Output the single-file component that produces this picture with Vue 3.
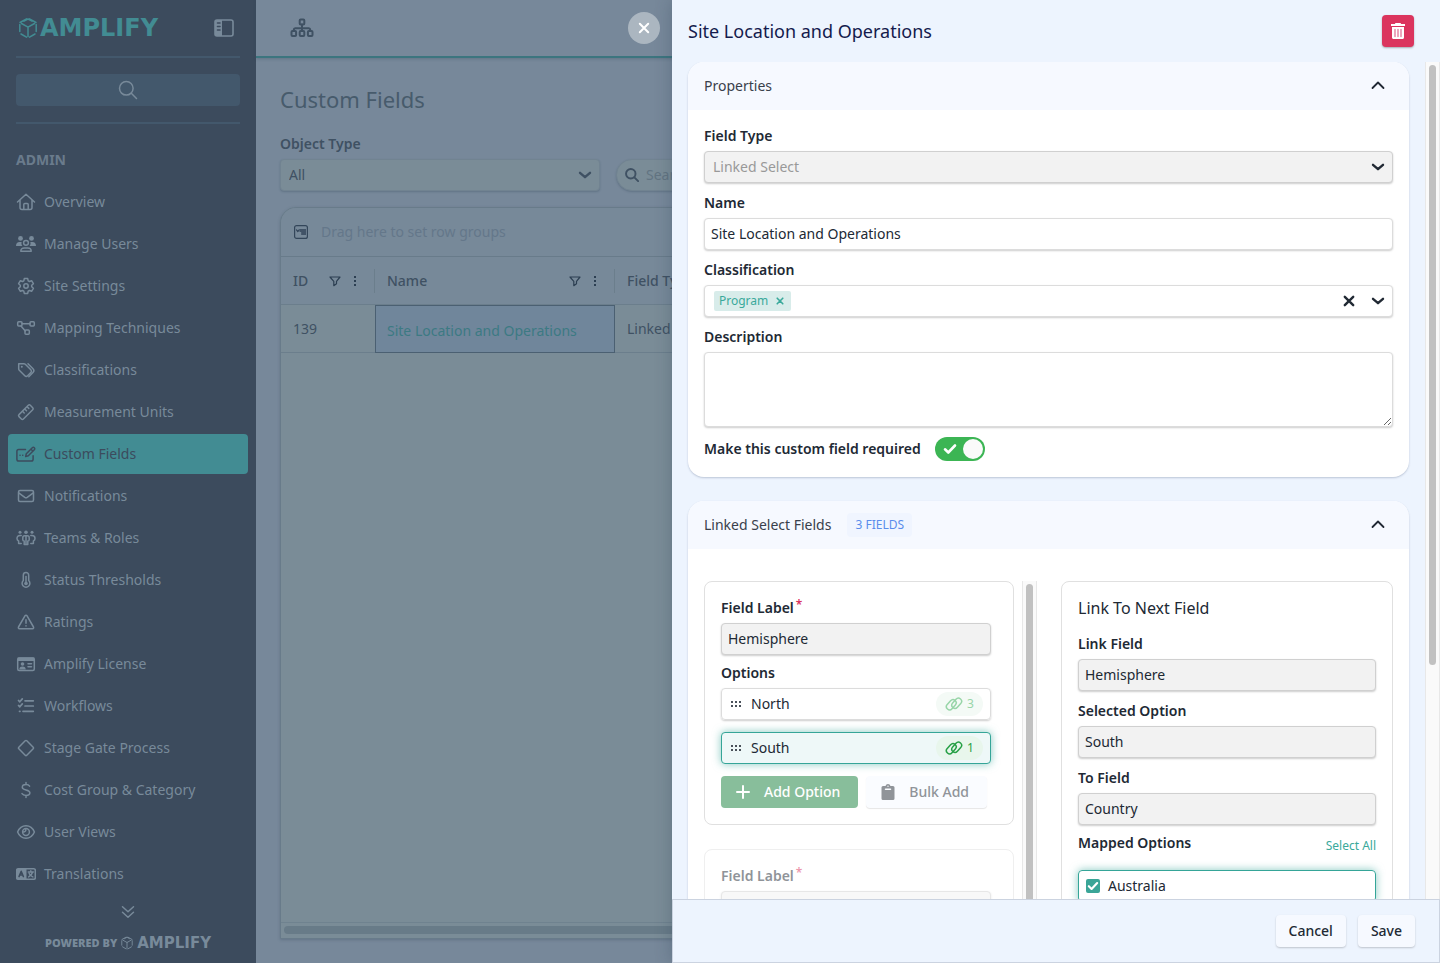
<template>
  <div class="layout">
    <!-- Sidebar -->
    <aside class="sidebar">
      <div class="brand">
        <a href="#" class="logo" aria-label="Amplify">
          <svg class="cube" viewBox="0 0 20 22" v-html="icons.cube"></svg>
          <span>AMPLIFY</span>
        </a>
        <button class="collapse" type="button" aria-label="Collapse menu">
          <svg viewBox="0 0 20 18" v-html="icons.panel"></svg>
        </button>
      </div>
      <hr />
      <button class="side-search" type="button" aria-label="Search">
        <svg viewBox="0 0 20 20" v-html="icons.search"></svg>
      </button>
      <hr />
      <h2>ADMIN</h2>
      <nav>
        <a
          v-for="item in menu"
          :key="item.label"
          href="#"
          class="nav-item"
          :class="{ active: item.active }"
        >
          <svg viewBox="0 0 20 20" v-html="icons[item.icon]"></svg>
          <span>{{ item.label }}</span>
        </a>
      </nav>
      <button class="more" type="button" aria-label="More">
        <svg viewBox="0 0 14 14" v-html="icons.double"></svg>
      </button>
      <div class="powered">
        <span>POWERED BY</span>
        <svg class="cube" viewBox="0 0 20 22" v-html="icons.cube"></svg>
        <span class="powered-logo">AMPLIFY</span>
      </div>
    </aside>

    <!-- Page -->
    <main class="page">
      <header class="topbar">
        <button type="button" aria-label="Hierarchy">
          <svg viewBox="0 0 24 20" v-html="icons.sitemap"></svg>
        </button>
      </header>
      <div class="content">
        <h1>Custom Fields</h1>
        <label class="filter-label" for="object-type">Object Type</label>
        <div class="filters">
          <div class="filter-select">
            <select id="object-type" v-model="objectType">
              <option>All</option>
            </select>
            <svg viewBox="0 0 14 14" v-html="icons.down"></svg>
          </div>
          <div class="filter-search">
            <svg viewBox="0 0 16 16" v-html="icons.find"></svg>
            <input v-model="search" type="text" placeholder="Search" aria-label="Search fields" />
          </div>
        </div>

        <section class="grid">
          <div class="group-bar">
            <svg viewBox="0 0 14 14" v-html="icons.group"></svg>
            <span>Drag here to set row groups</span>
          </div>
          <table>
            <colgroup>
              <col class="col-id" />
              <col class="col-name" />
              <col />
            </colgroup>
            <thead>
              <tr>
                <th v-for="col in columns" :key="col">
                  <div class="th">
                    <span>{{ col }}</span>
                    <svg class="funnel" viewBox="0 0 12 12" v-html="icons.funnel"></svg>
                    <svg class="dots" viewBox="0 0 4 12" v-html="icons.dots"></svg>
                  </div>
                </th>
              </tr>
            </thead>
            <tbody>
              <tr>
                <td>139</td>
                <td class="focused"><a href="#">Site Location and Operations</a></td>
                <td>Linked Select</td>
              </tr>
            </tbody>
          </table>
          <div class="grid-scroll"><div></div></div>
        </section>
      </div>
    </main>

    <!-- Drawer -->
    <aside class="drawer">
      <button class="close" type="button" aria-label="Close">
        <svg viewBox="0 0 12 12" v-html="icons.close"></svg>
      </button>
      <header class="drawer-head">
        <h2>{{ name }}</h2>
        <button class="delete" type="button" aria-label="Delete">
          <svg viewBox="0 0 14 16" v-html="icons.trash"></svg>
        </button>
      </header>

      <div class="drawer-main">
        <div class="drawer-body">
          <section class="card">
            <button class="card-head" type="button">
              <span>Properties</span>
              <svg viewBox="0 0 14 14" v-html="icons.up"></svg>
            </button>
            <div class="card-body">
              <div class="field">
                <label for="field-type">Field Type</label>
                <div class="select">
                  <select id="field-type" disabled>
                    <option>Linked Select</option>
                  </select>
                  <svg viewBox="0 0 14 14" v-html="icons.down"></svg>
                </div>
              </div>
              <div class="field">
                <label for="name">Name</label>
                <input id="name" v-model="name" class="control" type="text" />
              </div>
              <div class="field">
                <label for="classification">Classification</label>
                <div class="control multi">
                  <span class="tag">
                    Program
                    <button type="button" aria-label="Remove Program">
                      <svg viewBox="0 0 12 12" v-html="icons.close"></svg>
                    </button>
                  </span>
                  <input id="classification" type="text" />
                  <button type="button" aria-label="Clear">
                    <svg class="clear" viewBox="0 0 12 12" v-html="icons.close"></svg>
                  </button>
                  <button type="button" aria-label="Open">
                    <svg viewBox="0 0 14 14" v-html="icons.down"></svg>
                  </button>
                </div>
              </div>
              <div class="field">
                <label for="description">Description</label>
                <textarea id="description" v-model="description" class="control"></textarea>
              </div>
              <label class="toggle-row">
                <span>Make this custom field required</span>
                <input v-model="required" type="checkbox" />
                <span class="toggle">
                  <svg viewBox="0 0 14 12" v-html="icons.check"></svg>
                </span>
              </label>
            </div>
          </section>

          <section class="card">
            <button class="card-head" type="button">
              <span>Linked Select Fields</span>
              <span class="badge">3 FIELDS</span>
              <svg viewBox="0 0 14 14" v-html="icons.up"></svg>
            </button>
            <div class="card-body linked">
              <div class="levels">
                <div class="panel">
                  <div class="field">
                    <label for="level-1">Field Label<sup>*</sup></label>
                    <input id="level-1" class="control" type="text" value="Hemisphere" disabled />
                  </div>
                  <h3>Options</h3>
                  <div
                    v-for="opt in options"
                    :key="opt.label"
                    class="option"
                    :class="{ selected: opt.selected }"
                  >
                    <svg class="grip" viewBox="0 0 12 8" v-html="icons.grip"></svg>
                    <span>{{ opt.label }}</span>
                    <span class="links">
                      <svg viewBox="0 0 18 14" v-html="icons.link"></svg>
                      {{ opt.links }}
                    </span>
                  </div>
                  <div class="panel-actions">
                    <button class="add" type="button" disabled>
                      <svg viewBox="0 0 14 14" v-html="icons.plus"></svg>
                      Add Option
                    </button>
                    <button class="bulk" type="button" disabled>
                      <svg viewBox="0 0 14 16" v-html="icons.clipboard"></svg>
                      Bulk Add
                    </button>
                  </div>
                </div>
                <div class="panel faded">
                  <div class="field">
                    <label for="level-2">Field Label<sup>*</sup></label>
                    <input id="level-2" class="control" type="text" value="Country" disabled />
                  </div>
                </div>
              </div>
              <div class="track"><div class="thumb"></div></div>
              <div class="panel mapping">
                <h4>Link To Next Field</h4>
                <div v-for="f in mapping" :key="f.id" class="field">
                  <label :for="f.id">{{ f.label }}</label>
                  <input :id="f.id" class="control" type="text" :value="f.value" disabled />
                </div>
                <div class="mapped-head">
                  <h3>Mapped Options</h3>
                  <a href="#">Select All</a>
                </div>
                <label class="mapped-option">
                  <input v-model="australia" type="checkbox" />
                  <span class="box"><svg viewBox="0 0 14 12" v-html="icons.check"></svg></span>
                  <span>Australia</span>
                </label>
              </div>
            </div>
          </section>
        </div>
        <div class="track body-track"><div class="thumb"></div></div>
      </div>

      <footer class="drawer-foot">
        <button type="button">Cancel</button>
        <button type="button">Save</button>
      </footer>
    </aside>
  </div>
</template>

<script setup>
import { ref } from "vue";

const objectType = ref("All");
const search = ref("");
const name = ref("Site Location and Operations");
const description = ref("");
const required = ref(true);
const australia = ref(true);

const columns = ["ID", "Name", "Field Type"];

const menu = [
  { label: "Overview", icon: "home" },
  { label: "Manage Users", icon: "users" },
  { label: "Site Settings", icon: "gear" },
  { label: "Mapping Techniques", icon: "diagram" },
  { label: "Classifications", icon: "tags" },
  { label: "Measurement Units", icon: "ruler" },
  { label: "Custom Fields", icon: "edit", active: true },
  { label: "Notifications", icon: "mail" },
  { label: "Teams & Roles", icon: "team" },
  { label: "Status Thresholds", icon: "thermo" },
  { label: "Ratings", icon: "warning" },
  { label: "Amplify License", icon: "idcard" },
  { label: "Workflows", icon: "checklist" },
  { label: "Stage Gate Process", icon: "diamond" },
  { label: "Cost Group & Category", icon: "dollar" },
  { label: "User Views", icon: "eye" },
  { label: "Translations", icon: "language" },
];

const options = [
  { label: "North", links: 3 },
  { label: "South", links: 1, selected: true },
];

const mapping = [
  { id: "link-field", label: "Link Field", value: "Hemisphere" },
  { id: "selected-option", label: "Selected Option", value: "South" },
  { id: "to-field", label: "To Field", value: "Country" },
];

// svg contents, stroked with currentColor unless they carry class "f"
const icons = {
  cube: '<path d="M8.5 1.8 2 5.5M11.5 1.8 18 5.5M1.8 7.5v7M18.2 7.5v7M3 17l5.5 3.2M17 17l-5.5 3.2M3.5 6.5 10 10.2l6.500-3.7M10 10.2v9.300M6 4.200l4-2.200 4 2.200"/>',
  panel: '<rect x="1" y="1" width="18" height="16" rx="2"/><path class="f" d="M1 1h7v16H1z"/><path d="M3.500 4h2.500M3.500 7.500h2.500M3.500 11h2.500" stroke="#3c4b5d"/>',
  search: '<circle cx="8.3" cy="8.3" r="6.8"/><path d="m13.3 13.3 5.200 5.200"/>',
  home: '<path d="M1.5 10 10 2.300l8.500 7.700M4 8v7.500a2 2 0 0 0 2 2h8a2 2 0 0 0 2-2V8M7.800 17.500v-5a1 1 0 0 1 1-1h2.400a1 1 0 0 1 1 1v5"/>',
  users: '<circle class="f" cx="4.500" cy="4.400" r="2.400"/><circle class="f" cx="15.500" cy="4.400" r="2.400"/><path class="f" d="M0 12c0-2.600 1.400-4 3.500-4h2.200c-.5 1.500-.3 2.800.7 4zM20 12c0-2.600-1.400-4-3.500-4h-2.200c.5 1.500.3 2.800-.7 4z"/><circle cx="10" cy="8.800" r="2.400"/><path d="M4.800 17.200c0-2.200 1.400-3.200 3.400-3.200h3.600c2 0 3.400 1 3.400 3.200z"/>',
  gear: '<path d="M8.300 2.600h3.400l.5 2.200 1.300.7 2.100-.8 1.800 3-1.700 1.500v1.600l1.700 1.500-1.800 3-2.100-.8-1.300.7-.5 2.200H8.300l-.5-2.200-1.300-.7-2.100.8-1.800-3 1.700-1.500V9.200L2.600 7.700l1.800-3 2.100.8 1.300-.7z"/><circle cx="10" cy="10" r="2.200"/>',
  diagram: '<rect x="1.700" y="3.700" width="4.300" height="4.300" rx="1"/><rect x="14" y="3.700" width="4.300" height="4.300" rx="1"/><rect x="9" y="12" width="4.300" height="4.300" rx="1"/><path d="M6 5.800h8M5 8l4.300 5"/>',
  tags: '<path d="M2.700 3.700v5.200c0 .5.200 1 .6 1.400l5.500 5.500c.8.800 2 .8 2.800 0l3.200-3.200c.8-.8.800-2 0-2.800L9.300 4.300c-.4-.4-.9-.6-1.400-.6z"/><path d="m12 3.700 5 5.100c1 1 1 2.700 0 3.700l-4.200 4.200"/><circle class="f" cx="5.800" cy="6.800" r="1"/>',
  ruler: '<path d="m3 12.600 9.300-9.300c.6-.6 1.400-.6 2 0l2.400 2.400c.6.600.6 1.400 0 2l-9.300 9.300c-.6.600-1.400.6-2 0L3 14.600c-.6-.6-.6-1.400 0-2zM7 9.800l1.200 1.200M9.300 7.500l1.200 1.200M11.600 5.200l1.200 1.200"/>',
  edit: '<path d="M9.500 5.500H2.700a1.800 1.800 0 0 0-1.800 1.800v8c0 1 .8 1.800 1.800 1.800h12.600c1 0 1.800-.8 1.800-1.800v-3.500M9.700 12.500l.6-2.800 6-6c.6-.6 1.400-.6 2 0s.6 1.400 0 2l-6 6zM14.800 5l2.200 2.200"/><path d="M4 11.300h.1M6.700 11.300h.1"/>',
  mail: '<rect x="2.500" y="4.500" width="15" height="11" rx="1.500"/><path d="m2.700 6.800 6.100 4.600c.8.500 1.600.5 2.400 0l6.100-4.600"/>',
  team: '<circle class="f" cx="4" cy="4.200" r="1.500"/><circle class="f" cx="10" cy="4.200" r="1.800"/><circle class="f" cx="16" cy="4.200" r="1.500"/><path d="M5.200 7.500H4c-1.800 0-3 1.200-3 3 0 1.300.6 2 1.600 2.400V15.500h2.600M14.800 7.500H16c1.800 0 3 1.200 3 3 0 1.300-.6 2-1.600 2.400V15.500h-2.600M8.700 7.700h2.600c1 0 1.900.9 1.900 2v2c0 .8-.6 1.300-1.400 1.300v3.500H8.200V13c-.8 0-1.400-.5-1.400-1.300v-2c0-1.100.9-2 1.900-2zM10 8.500v7.500"/>',
  thermo: '<path d="M10 2.500a2.700 2.700 0 0 0-2.700 2.700v5.300a3.900 3.900 0 1 0 5.400 0V5.200A2.700 2.700 0 0 0 10 2.500z"/><path d="M10 6.500v6"/><circle class="f" cx="10" cy="13.500" r="1.800"/>',
  warning: '<path d="M9.100 3.700 2.500 15c-.4.800 0 1.700.9 1.700h13.200c.9 0 1.300-.9.9-1.700L10.900 3.700c-.4-.7-1.400-.7-1.800 0z"/><path d="M10 7.800v3.500M10 13.800v.1"/>',
  idcard: '<rect x="1.700" y="4" width="16.600" height="12.500" rx="1.500"/><path class="f" d="M1.700 3.500h16.600v3.500H1.700z"/><circle class="f" cx="6.500" cy="10" r="1.800"/><path class="f" d="M3.300 15.500c0-2 1-3 3.200-3s3.200 1 3.200 3z"/><path d="M12 9.800h3.500M12 12.800h3.500"/>',
  checklist: '<path d="m2.500 4.500 1.300 1.300 2.500-2.900M2.500 9.500l1.300 1.300 2.500-2.900M9 4.800h8.300M9 10h8.300M7 15.300h10.300M3.500 15.300h.5" stroke-width="1.700"/>',
  diamond: '<path d="M9.200 2.800 2.800 9.200c-.5.500-.5 1.100 0 1.600l6.400 6.400c.5.500 1.100.5 1.600 0l6.400-6.400c.5-.5.500-1.100 0-1.600l-6.400-6.400c-.5-.5-1.100-.5-1.600 0z"/>',
  dollar: '<path d="M13.600 6.200C12.800 5 11.500 4.600 10 4.600c-2.300 0-3.700 1-3.700 2.600 0 3.800 7.600 1.600 7.600 5.600 0 1.600-1.500 2.600-3.900 2.600-1.800 0-3.200-.6-4-1.800M10 2.500v2M10 15.500v2"/>',
  eye: '<path d="M1.600 10c1.600-3.900 4.600-6.200 8.400-6.200s6.800 2.300 8.400 6.200c-1.600 3.900-4.600 6.200-8.400 6.200S3.200 13.900 1.600 10z"/><circle cx="10" cy="10" r="3.400"/><path d="M9.800 7.500c.2 1.500-.8 2.500-2.500 2.500"/>',
  language: '<rect x=".7" y="4.700" width="18.600" height="10.600" rx="1.500"/><path class="f" d="M.7 4.700h9.800v10.600H.7z"/><path d="m3 12.600 2.200-5.300 2.200 5.300M3.700 11h3" stroke="#3c4b5d"/><path d="M12.300 8h5M14.800 6.800V8M16.500 8.300c-.5 2-2 3.700-3.800 4.600M13.200 9.500c.8 1.600 2 2.800 3.600 3.400"/>',
  double: '<path d="m1.500 1.800 5.500 5 5.500-5M1.500 7.300l5.500 5 5.500-5"/>',
  sitemap: '<rect x="9.700" y="1.500" width="4.600" height="5" rx="1"/><rect x="1.500" y="13" width="4.600" height="5" rx="1"/><rect x="9.700" y="13" width="4.600" height="5" rx="1"/><rect x="17.900" y="13" width="4.600" height="5" rx="1"/><path d="M12 6.500V13M3.800 13v-1.300c0-.9.500-1.500 1.400-1.500h13.600c.9 0 1.400.6 1.400 1.500V13"/>',
  down: '<path d="m2 4.800 5 4.400 5-4.400"/>',
  up: '<path d="m1.500 9 5.500-5.500 5.500 5.500"/>',
  find: '<circle cx="6.600" cy="6.600" r="5.400"/><path d="m10.700 10.700 4.300 4.300"/>',
  group: '<rect x=".6" y=".6" width="12.800" height="12.800" rx="2"/><path class="f" opacity=".8" d="M5.500 4h6.500v6H7.200V7H5.500z"/><path d="m2.500 4.800 1.300 1.800 1.300-1.800" stroke-width="1.200"/>',
  funnel: '<path d="M1 2h10L7.500 6.300v2.400l-2.700 2V6.300z"/>',
  dots: '<path class="f" d="M1 1h2v2H1zM1 5h2v2H1zM1 9h2v2H1z"/>',
  close: '<path d="m1.800 1.800 8.400 8.400M10.200 1.800l-8.400 8.400"/>',
  trash: '<path class="f" d="M4.500 0h5l.7 1H14v2H0V1h3.800z"/><path class="f" d="M1 4h12v10.500c0 .8-.7 1.500-1.500 1.500h-9c-.8 0-1.500-.7-1.500-1.500z"/><path d="M4 6.500v7M7 6.500v7M10 6.500v7" stroke="#e689a8"/>',
  check: '<path d="m2 6.300 3.300 3.200L12 2.500"/>',
  grip: '<path class="f" d="M1 1h2v2H1zM5 1h2v2H5zM9 1h2v2H9zM1 5h2v2H1zM5 5h2v2H5zM9 5h2v2H9z"/>',
  link: '<rect x=".6" y="4.500" width="11.400" height="6.400" rx="3.200" transform="rotate(-48 6.300 7.700)"/><rect x="6" y="3.100" width="11.400" height="6.400" rx="3.200" transform="rotate(-48 11.700 6.300)"/>',
  plus: '<path d="M7 1v12M1 7h12"/>',
  clipboard: '<path class="f" d="M2 2h2.500a2.600 2.600 0 0 1 5 0H12a1.500 1.500 0 0 1 1.500 1.500v11A1.500 1.500 0 0 1 12 16H2a1.500 1.500 0 0 1-1.500-1.500v-11A1.500 1.500 0 0 1 2 2z"/><path d="M4.500 5.300h5" stroke="#fafcff"/><circle cx="7" cy="2.300" r=".7" fill="#fafcff" stroke="none"/>',
};
</script>

<style>
body {
  margin: 0;
  overflow: hidden;
}

svg .f {
  fill: currentColor;
  stroke: none;
}
</style>

<style scoped>
.layout {
  position: relative;
  display: flex;
  height: 100vh;
  overflow: hidden;
  font-family: "Noto Sans", sans-serif;
  font-size: 14px;
  line-height: 20px;
  color: #212934;
}

.layout *,
.layout *::before {
  box-sizing: border-box;
}

svg {
  display: block;
  flex: none;
  fill: none;
  stroke: currentColor;
  stroke-width: 1.5;
  stroke-linecap: round;
  stroke-linejoin: round;
}

button,
input,
select,
textarea {
  font: inherit;
  color: inherit;
}

button {
  display: flex;
  align-items: center;
  justify-content: center;
  padding: 0;
  border: none;
  background: none;
  cursor: pointer;
}

a {
  color: inherit;
  text-decoration: none;
}

h1,
h2,
h3,
h4 {
  margin: 0;
  font-weight: 400;
}

/* sidebar */
.sidebar {
  display: flex;
  flex: none;
  flex-direction: column;
  width: 256px;
  background: #3c4b5d;
  color: #788a9a;
}

.brand {
  display: flex;
  align-items: center;
  justify-content: space-between;
  height: 56px;
  padding: 0 22px 0 18px;
}

.logo {
  display: flex;
  align-items: center;
  gap: 2px;
  color: #428c93;
  font: bold 24px/24px "DejaVu Sans", sans-serif;
}

.logo .cube {
  width: 20px;
  height: 22px;
}

.collapse svg {
  width: 20px;
  height: 18px;
  stroke-width: 1.6;
}

hr {
  flex: none;
  width: 224px;
  height: 2px;
  margin: 0 16px;
  border: none;
  background: #43586c;
}

.side-search {
  flex: none;
  height: 32px;
  margin: 16px;
  border-radius: 4px;
  background: #43586c;
}

.side-search svg {
  width: 20px;
  height: 20px;
}

.sidebar h2 {
  margin: 26px 16px 12px;
  color: #6a7b8c;
  font-size: 14px;
  font-weight: 700;
}

nav {
  display: flex;
  flex-direction: column;
  gap: 2px;
  padding: 0 8px;
}

.nav-item {
  display: flex;
  align-items: center;
  gap: 8px;
  height: 40px;
  padding: 0 8px;
  border-radius: 4px;
}

.nav-item svg {
  width: 20px;
  height: 20px;
}

.nav-item.active {
  background: #428c93;
  color: #3c4b5d;
}

.more {
  height: 36px;
}

.more svg {
  width: 14px;
  height: 14px;
}

.powered {
  display: flex;
  align-items: center;
  justify-content: center;
  gap: 3px;
  height: 26px;
  font-size: 11px;
  font-weight: 900;
}

.powered .cube {
  width: 14px;
  height: 14px;
}

.powered-logo {
  font: bold 15px/20px "DejaVu Sans", sans-serif;
}

/* page */
.page {
  display: flex;
  flex: 1;
  flex-direction: column;
  min-width: 0;
  background: #77889a;
  color: #3f5163;
}

.topbar {
  display: flex;
  flex: none;
  align-items: center;
  height: 58px;
  padding: 0 34px;
  border-bottom: 2px solid #3c757f;
  box-shadow: 0 1px 3px rgba(50, 70, 90, 0.3);
}

.topbar svg {
  width: 24px;
  height: 20px;
  stroke-width: 2;
}

.content {
  display: flex;
  flex: 1;
  flex-direction: column;
  min-height: 0;
  padding: 26px 24px 24px;
}

h1 {
  margin-bottom: 20px;
  color: #475b6c;
  font-size: 22px;
  line-height: 30px;
}

.filter-label {
  margin-bottom: 5px;
  font-weight: 600;
}

.filters {
  display: flex;
  gap: 16px;
  margin-bottom: 16px;
}

.filter-select {
  position: relative;
  width: 320px;
}

.filter-select select,
.filter-search {
  height: 32px;
  border: 1px solid #718391;
  border-radius: 4px;
  background: #7a8c97;
  box-shadow: 0 1px 2px rgba(50, 70, 90, 0.3);
}

.filter-select select,
.select select {
  appearance: none;
  width: 100%;
  padding: 0 8px;
  opacity: 1;
}

.filter-select svg,
.select svg {
  position: absolute;
  top: 9px;
  right: 8px;
  width: 14px;
  height: 14px;
  stroke-width: 2.4;
  pointer-events: none;
}

.filter-search {
  display: flex;
  flex: 1;
  align-items: center;
  gap: 7px;
  padding: 0 8px;
  border-radius: 16px;
}

.filter-search svg {
  width: 14px;
  height: 14px;
  stroke-width: 2.2;
}

.filter-search input {
  flex: 1;
  min-width: 0;
  padding: 0;
  border: none;
  background: none;
}

.filter-search input::placeholder {
  color: #627482;
}

.grid {
  display: flex;
  flex: 1;
  flex-direction: column;
  border: 1px solid #687b8a;
  border-radius: 16px 16px 0 0;
  background: #7a8c97;
  box-shadow: 0 1px 3px rgba(50, 70, 90, 0.3);
  overflow: hidden;
}

.group-bar {
  display: flex;
  flex: none;
  align-items: center;
  gap: 13px;
  height: 49px;
  padding: 0 13px;
  border-bottom: 1px solid #687b8a;
  background: #778999;
  color: #64778a;
}

.group-bar svg {
  width: 14px;
  height: 14px;
  color: #33465a;
  stroke-width: 1.2;
}

table {
  width: 100%;
  border-collapse: separate;
  border-spacing: 0;
  table-layout: fixed;
}

.col-id {
  width: 94px;
}

.col-name {
  width: 240px;
}

th,
td {
  height: 48px;
  padding: 0 12px;
  border-bottom: 1px solid #6b7e8c;
  text-align: left;
}

th {
  background: #778999;
  font-weight: 500;
}

.th {
  display: flex;
  align-items: center;
  gap: 12px;
  height: 24px;
  margin-right: -12px;
  padding-right: 17px;
  border-right: 1px solid #6b7e8c;
}

.th span {
  flex: 1;
}

.th svg {
  width: 12px;
  height: 12px;
  color: #2c3f52;
  stroke-width: 1.2;
}

.th .dots {
  width: 4px;
  height: 12px;
}

td.focused {
  padding: 4px 11px 0;
  border: 1px solid #4b6072;
  background: #70869b;
  color: #3c7a83;
}

.grid-scroll {
  height: 16px;
  margin-top: auto;
  padding: 3px;
  border-top: 1px solid #6f828f;
}

.grid-scroll div {
  height: 8px;
  border-radius: 4px;
  background: #687b88;
}

/* drawer */
.drawer {
  position: absolute;
  top: 0;
  right: 0;
  bottom: 0;
  display: flex;
  flex-direction: column;
  width: 768px;
  max-width: 100%;
  background: #edf4fe;
  box-shadow: 0 0 16px rgba(40, 60, 80, 0.3);
}

.close {
  position: absolute;
  top: 12px;
  left: -44px;
  width: 32px;
  height: 32px;
  border-radius: 50%;
  background: #abb6c0;
  color: #fff;
}

.close svg {
  width: 12px;
  height: 12px;
  stroke-width: 2;
}

.drawer-head {
  display: flex;
  flex: none;
  align-items: center;
  justify-content: space-between;
  height: 62px;
  padding: 0 26px 0 16px;
}

.drawer-head h2 {
  color: #141b4d;
  font-size: 18px;
  line-height: 24px;
}

.delete {
  width: 32px;
  height: 32px;
  border-radius: 4px;
  background: #db345e;
  box-shadow: 0 1px 2px rgba(0, 0, 0, 0.3);
  color: #fff;
}

.delete svg {
  width: 14px;
  height: 16px;
}

.drawer-main {
  display: flex;
  flex: 1;
  gap: 16px;
  min-height: 0;
  padding-left: 16px;
}

.drawer-body {
  display: flex;
  flex: 1;
  flex-direction: column;
  gap: 24px;
  min-width: 0;
  overflow: hidden;
  margin-left: -4px;
  margin-right: -4px;
  padding: 0 4px;
}

.card {
  flex: none;
  border-radius: 16px;
  background: #fff;
  box-shadow: 0 1px 2px rgba(40, 60, 100, 0.25);
}

.card-head {
  width: 100%;
  height: 48px;
  gap: 16px;
  padding: 0 24px 0 16px;
  border-radius: 16px 16px 0 0;
  background: #f6f9ff;
  color: #39404b;
}

.card-head svg {
  width: 14px;
  height: 14px;
  margin-left: auto;
  color: #212934;
  stroke-width: 1.8;
}

.badge {
  padding: 2px 8px;
  border-radius: 4px;
  background: #f0f5ff;
  color: #5a8dec;
  font-size: 12px;
}

.card-body {
  padding: 16px;
}

.field {
  margin-bottom: 10px;
}

.field label,
h3,
.toggle-row {
  display: block;
  font-size: 14px;
  font-weight: 600;
}

.field label,
h3 {
  margin-bottom: 5px;
}

.control,
.select select {
  display: block;
  width: 100%;
  height: 32px;
  border: 1px solid #dcdcdc;
  border-radius: 4px;
  background: #fff;
  box-shadow: 0 1px 2px rgba(0, 0, 0, 0.2);
}

.control {
  padding: 0 6px 2px;
}

.control:disabled,
.select select:disabled {
  border-color: #d0d0d0;
  background: #f2f2f2;
}

.select {
  position: relative;
}

.select select:disabled {
  color: #999;
}

textarea.control {
  height: 75px;
}

.multi {
  display: flex;
  align-items: center;
  padding: 0 7px 0 9px;
}

.multi > input {
  flex: 1;
  min-width: 0;
  border: none;
  background: none;
}

.multi > button {
  margin-left: 16px;
}

.multi svg {
  width: 14px;
  height: 14px;
  stroke-width: 2.4;
}

.multi svg.clear {
  width: 12px;
  height: 12px;
}

.tag {
  display: flex;
  align-items: center;
  gap: 8px;
  padding: 0 7px 0 5px;
  border-radius: 2px;
  background: #d8ecea;
  color: #3aa99b;
  font-size: 12px;
}

.tag svg {
  width: 8px;
  height: 8px;
}

.toggle-row {
  display: flex;
  align-items: center;
  gap: 14px;
  height: 24px;
}

.toggle-row input,
.mapped-option input {
  position: absolute;
  opacity: 0;
}

.toggle {
  display: flex;
  align-items: center;
  justify-content: space-between;
  width: 50px;
  height: 24px;
  padding: 0 2px 0 8px;
  border-radius: 12px;
  background: #3cb554;
  color: #fff;
}

.toggle::after {
  content: "";
  width: 20px;
  height: 20px;
  border-radius: 50%;
  background: #fafafa;
}

.toggle svg {
  width: 14px;
  height: 12px;
  stroke-width: 2.6;
}

.linked {
  display: flex;
  padding: 32px 16px;
}

.levels {
  display: flex;
  flex: none;
  flex-direction: column;
  gap: 24px;
  width: 310px;
  margin-right: 8px;
}

.panel {
  padding: 16px 22px 16px 16px;
  border: 1px solid #e0e0e0;
  border-radius: 8px;
}

.faded {
  opacity: 0.5;
}

.panel sup {
  position: relative;
  top: -4px;
  margin-left: 2px;
  color: #db345e;
  font-size: 12px;
  line-height: 0;
  vertical-align: baseline;
}

.levels .field {
  margin-bottom: 8px;
}

.option {
  display: flex;
  align-items: center;
  gap: 9px;
  height: 32px;
  margin-bottom: 12px;
  padding: 0 7px 0 8px;
  border: 1px solid #dcdcdc;
  border-radius: 4px;
  box-shadow: 0 1px 2px rgba(0, 0, 0, 0.2);
}

.grip {
  width: 12px;
  height: 8px;
  color: #4a515a;
}

.links {
  display: flex;
  align-items: center;
  justify-content: center;
  gap: 4px;
  width: 47px;
  height: 24px;
  margin-left: auto;
  border-radius: 12px;
  background: #f4faf6;
  color: #98d5a8;
  font-size: 12px;
}

.links svg {
  width: 18px;
  height: 14px;
}

.option.selected {
  border-color: #35a598;
  background: #eef8f8;
  box-shadow: 0 0 8px rgba(53, 165, 152, 0.6);
}

.selected .links {
  background: #e8f6ec;
  color: #27a046;
}

.panel-actions {
  display: flex;
  gap: 8px;
}

.panel-actions button {
  height: 32px;
  gap: 14px;
  padding: 0 18px 0 15px;
  border-radius: 4px;
  font-size: 14px;
  font-weight: 500;
}

.add {
  background: #88be9b;
  color: #fff;
}

.add svg {
  width: 14px;
  height: 14px;
  stroke-width: 2;
}

.bulk {
  background: #fafcff;
  box-shadow: 0 1px 1px rgba(0, 0, 0, 0.1);
  color: #909499;
}

.bulk svg {
  width: 14px;
  height: 16px;
}

.track {
  flex: none;
  width: 15px;
  padding: 3px 3px 0 3px;
  border-left: 1px solid #e8e8e8;
  border-right: 1px solid #e8e8e8;
  background: #fafafa;
}

.thumb {
  height: 100%;
  border-radius: 4px;
  background: #c1c1c1;
}

.body-track .thumb {
  height: 72%;
}

.mapping {
  flex: 1;
  min-width: 0;
  margin-left: 24px;
  padding: 16px;
}

.mapping h4 {
  margin-bottom: 16px;
  font-size: 16px;
}

.mapped-head {
  display: flex;
  justify-content: space-between;
  margin-top: -2px;
  margin-bottom: 12px;
}

.mapped-head a {
  padding-top: 3px;
  color: #3aa99b;
  font-size: 12px;
}

.mapped-option {
  display: flex;
  align-items: center;
  gap: 8px;
  height: 32px;
  padding: 0 7px;
  border: 1px solid #35a598;
  border-radius: 4px;
  box-shadow: 0 0 8px rgba(53, 165, 152, 0.6);
}

.box {
  display: flex;
  align-items: center;
  justify-content: center;
  width: 14px;
  height: 14px;
  border-radius: 2px;
  background: #3aa597;
  color: #fff;
}

.box svg {
  width: 12px;
  height: 10px;
  stroke-width: 2.6;
}

.drawer-foot {
  display: flex;
  flex: none;
  align-items: center;
  justify-content: flex-end;
  gap: 12px;
  height: 64px;
  padding: 0 24px;
  border: 1px solid #cbd3e0;
  background: #edf4fe;
}

.drawer-foot button {
  height: 32px;
  padding: 0 13px;
  border-radius: 4px;
  background: #f6f9ff;
  box-shadow: 0 1px 2px rgba(0, 0, 0, 0.2);
  font-weight: 500;
}
</style>
